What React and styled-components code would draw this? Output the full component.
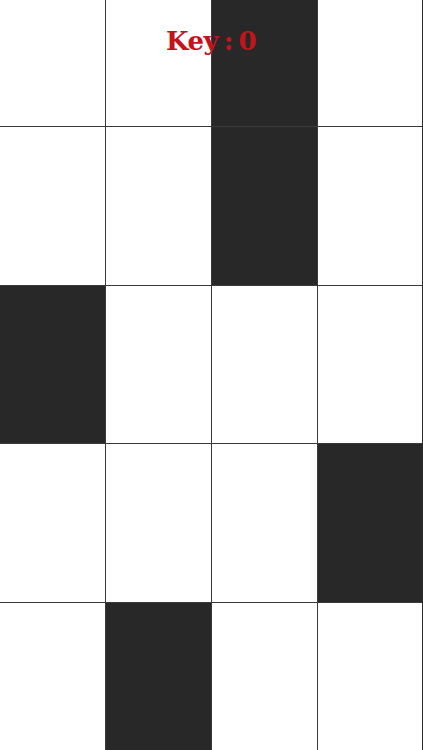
import React from "react";
import styled, { createGlobalStyle } from "styled-components";

const Global = createGlobalStyle`
  html, body { margin: 0; padding: 0; background: #fff; }
  body { width: 423px; height: 750px; overflow: hidden; }
`;

const Board = styled.div`
  position: relative;
  width: 423px;
  height: 750px;
  display: grid;
  grid-template-columns: 105px 105px 105px 104px;
  grid-template-rows: 126px 158px 157px 158px 1fr;
  gap: 1px;
  background: #3a3a3a;
  border-right: 1px solid #2a2a2a;
  box-sizing: border-box;
`;

const Tile = styled.div`
  background: ${(p) => (p.$black ? "#282828" : "#ffffff")};
`;

const Score = styled.div`
  position: absolute;
  top: 25px;
  left: 0;
  right: 0;
  text-align: center;
  font-family: "DejaVu Serif", "Liberation Serif", serif;
  font-weight: bold;
  font-size: 26px;
  line-height: 32px;
  color: #c4141b;
  letter-spacing: -0.5px;
  word-spacing: -3px;
`;

const blacks = [2, 2, 0, 3, 1];

export default function App() {
  return (
    <>
      <Global />
      <Board>
        {blacks.map((b, r) =>
          [0, 1, 2, 3].map((c) => <Tile key={`${r}-${c}`} $black={c === b} />)
        )}
        <Score>Key : 0</Score>
      </Board>
    </>
  );
}
